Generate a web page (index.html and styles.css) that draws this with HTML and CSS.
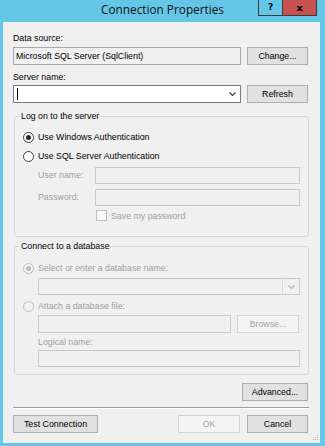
FILE: index.html
```html
<!DOCTYPE html>
<html>
<head>
<meta charset="utf-8">
<title>Connection Properties</title>
<link rel="stylesheet" href="styles.css">
</head>
<body>
<div class="window">
  <div class="titlebar">
    <div class="title">Connection Properties</div>
    <div class="caption-btns">
      <span class="cap-help">?</span>
      <span class="cap-close">x</span>
    </div>
  </div>
  <div class="client">
    <div class="label ds-label">Data source:</div>
    <div class="field-row ds-row">
      <div class="textbox readonly ds-box">Microsoft SQL Server (SqlClient)</div>
      <button class="btn side-btn">Change...</button>
    </div>
    <div class="label server-label">Server name:</div>
    <div class="field-row server-row">
      <div class="combo focused server-combo">
        <span class="caret"></span>
        <svg class="chev" width="7" height="4" viewBox="0 0 7 4"><polyline points="0.5,0.5 3.5,3.5 6.5,0.5" fill="none" stroke="#3c3c3c" stroke-width="1.1"/></svg>
      </div>
      <button class="btn side-btn">Refresh</button>
    </div>

    <fieldset class="group logon-group">
      <legend>Log on to the server</legend>
      <div class="radio-row win-row"><span class="radio checked"></span><span>Use Windows Authentication</span></div>
      <div class="radio-row sql-row"><span class="radio"></span><span>Use SQL Server Authentication</span></div>
      <div class="cred-row user-row">
        <span class="cred-label disabled-text">User name:</span>
        <div class="textbox disabled cred-box"></div>
      </div>
      <div class="cred-row pass-row">
        <span class="cred-label disabled-text">Password:</span>
        <div class="textbox disabled cred-box"></div>
      </div>
      <div class="check-row">
        <span class="checkbox disabled"></span><span class="disabled-text">Save my password</span>
      </div>
    </fieldset>

    <fieldset class="group db-group">
      <legend>Connect to a database</legend>
      <div class="radio-row select-row disabled-text"><span class="radio checked disabled"></span><span>Select or enter a database name:</span></div>
      <div class="combo disabled db-combo">
        <span class="combo-btn">
          <svg class="chev" width="7" height="4" viewBox="0 0 7 4"><polyline points="0.5,0.5 3.5,3.5 6.5,0.5" fill="none" stroke="#b5b5b5" stroke-width="1.1"/></svg>
        </span>
      </div>
      <div class="radio-row attach-row disabled-text"><span class="radio disabled"></span><span>Attach a database file:</span></div>
      <div class="file-row">
        <div class="textbox disabled file-box"></div>
        <button class="btn disabled browse-btn">Browse...</button>
      </div>
      <div class="label disabled-text logical-label">Logical name:</div>
      <div class="textbox disabled logical-box"></div>
    </fieldset>

    <div class="advanced-row">
      <button class="btn advanced-btn">Advanced...</button>
    </div>
    <div class="separator"></div>
    <div class="bottom-row">
      <button class="btn test-btn">Test Connection</button>
      <div class="bottom-right">
        <button class="btn disabled ok-btn">OK</button>
        <button class="btn cancel-btn">Cancel</button>
      </div>
    </div>
    <svg class="grip" width="7" height="7" viewBox="0 0 7 7">
      <rect x="5" y="0" width="1" height="1" fill="#b8b8b8"/>
      <rect x="3" y="2" width="1" height="1" fill="#b8b8b8"/>
      <rect x="5" y="2" width="1" height="1" fill="#b8b8b8"/>
      <rect x="1" y="4" width="1" height="1" fill="#b8b8b8"/>
      <rect x="3" y="4" width="1" height="1" fill="#b8b8b8"/>
      <rect x="5" y="4" width="1" height="1" fill="#b8b8b8"/>
    </svg>
  </div>
</div>
</body>
</html>
```

FILE: styles.css
```css
html, body {
  margin: 0;
  padding: 0;
}

body {
  background: #65c7e7;
  font-family: "Liberation Sans", Arial, sans-serif;
  font-size: 8.8px;
  color: #000;
}

.window {
  width: 325px;
  height: 446px;
  display: flex;
  flex-direction: column;
}

/* ---------- title bar ---------- */
.titlebar {
  height: 22px;
  flex: none;
  display: grid;
  grid-template-columns: 1fr auto 1fr;
  align-items: start;
}

.title {
  grid-column: 2;
  font-family: "Open Sans", "Liberation Sans", sans-serif;
  font-size: 11.8px;
  line-height: 16px;
  padding-top: 1px;
  color: #111;
  white-space: nowrap;
}

.caption-btns {
  grid-column: 3;
  justify-self: end;
  margin-right: 8px;
  display: flex;
  height: 15px;
  border: 1px solid #3a3a3a;
  border-top: 0;
}

.cap-help,
.cap-close {
  display: flex;
  align-items: center;
  justify-content: center;
  font-family: "DejaVu Sans", sans-serif;
  font-weight: bold;
  font-size: 9px;
  line-height: 15px;
  color: #000;
}

.cap-help {
  width: 23px;
  background: #65c7e7;
}

.cap-close {
  width: 33px;
  background: #c75050;
  border-left: 1px solid #3a3a3a;
  font-size: 9.5px;
}

/* ---------- client area ---------- */
.client {
  position: relative;
  margin: 0 5px 0 3px;
  height: 421px;
  box-sizing: border-box;
  background: #f0f0f0;
  padding: 11px 11px 0 10px;
  display: flex;
  flex-direction: column;
}

.label {
  line-height: 11px;
  height: 11px;
  white-space: nowrap;
}

.disabled-text {
  color: #a0a0a0;
}

.field-row {
  display: flex;
  align-items: center;
  gap: 6px;
}

.ds-row {
  margin-top: 3px;
}

.server-label {
  margin-top: 7px;
}

.server-row {
  margin-top: 2px;
}

.textbox,
.combo {
  box-sizing: border-box;
  border: 1px solid #c9c9c9;
  background: #f0f0f0;
  height: 17px;
  line-height: 15px;
  padding-left: 2px;
  white-space: nowrap;
}

.textbox.readonly {
  border-color: #a9a9a9;
  background: #f0f0f0;
  height: 18px;
  line-height: 16px;
}

.ds-box {
  width: 228px;
}

.combo {
  display: flex;
  align-items: center;
}

.combo.focused {
  background: #fff;
  border-color: #6f7f8f;
  height: 18px;
  width: 228px;
}

.caret {
  display: block;
  width: 1px;
  height: 12px;
  background: #000;
  margin-left: 1px;
}

.server-combo .chev {
  margin-left: auto;
  margin-right: 4px;
}

/* ---------- buttons ---------- */
.btn {
  box-sizing: border-box;
  height: 18px;
  margin: 0;
  padding: 0;
  border: 1px solid #adadad;
  border-radius: 0;
  background: #e1e1e1;
  font: inherit;
  color: #000;
  line-height: 16px;
  text-align: center;
  white-space: nowrap;
}

.btn.disabled {
  background: #f4f4f4;
  border-color: #d2d2d2;
  color: #a3a3a3;
}

.side-btn {
  width: 61px;
}

/* ---------- group boxes ---------- */
.group {
  margin: 8px 0 0 1px;
  padding: 0 8px 0 8px;
  border: 1px solid #d7d7d7;
  border-radius: 3px;
  min-width: 0;
  display: flex;
  flex-direction: column;
}

.group legend {
  margin-left: -4px;
  padding: 0 2px;
  line-height: 11px;
  white-space: nowrap;
}

.logon-group {
  padding-bottom: 14px;
}

.db-group {
  margin-top: 4px;
  padding-bottom: 7px;
}

.radio-row {
  display: flex;
  align-items: center;
  gap: 4px;
  height: 13px;
  line-height: 13px;
  white-space: nowrap;
}

.radio {
  box-sizing: border-box;
  width: 11px;
  height: 11px;
  border: 1px solid #3c3c3c;
  border-radius: 50%;
  background: #fff;
  display: flex;
  align-items: center;
  justify-content: center;
  flex: none;
}

.radio.checked::after {
  content: "";
  width: 5px;
  height: 5px;
  border-radius: 50%;
  background: #2a2a2a;
}

.radio.disabled {
  border-color: #bcbcbc;
  background: #f4f4f4;
}

.radio.disabled.checked::after {
  background: #bdbdbd;
}

.win-row {
  margin-top: 9px;
}

.sql-row {
  margin-top: 6px;
}

.cred-row {
  display: flex;
  align-items: center;
  padding-left: 15px;
}

.cred-label {
  width: 57px;
  line-height: 11px;
}

.cred-box {
  width: 205px;
}

.user-row {
  margin-top: 4px;
}

.pass-row {
  margin-top: 5px;
}

.check-row {
  display: flex;
  align-items: center;
  gap: 4px;
  margin-top: 3px;
  height: 13px;
  padding-left: 73px;
  white-space: nowrap;
}

.checkbox {
  box-sizing: border-box;
  width: 11px;
  height: 11px;
  border: 1px solid #bcbcbc;
  background: #f7f7f7;
  flex: none;
}

.select-row {
  margin-top: 10px;
}

.db-combo {
  margin: 3px 0 0 15px;
  width: 262px;
  padding-left: 0;
}

.combo-btn {
  margin-left: auto;
  width: 16px;
  height: 15px;
  border-left: 1px solid #dadada;
  display: flex;
  align-items: center;
  justify-content: center;
}

.attach-row {
  margin-top: 5px;
}

.file-row {
  display: flex;
  align-items: center;
  gap: 6px;
  margin: 2px 0 0 15px;
}

.file-box {
  width: 193px;
  height: 18px;
}

.browse-btn {
  width: 62px;
}

.logical-label {
  margin: 4px 0 0 15px;
}

.logical-box {
  margin: 2px 0 0 15px;
  width: 262px;
}

/* ---------- bottom ---------- */
.advanced-row {
  display: flex;
  justify-content: flex-end;
  margin-top: 8px;
  padding-right: 1px;
}

.advanced-btn {
  width: 66px;
}

.separator {
  margin-top: 6px;
  height: 0;
  border-top: 1px solid #a0a0a0;
  border-bottom: 1px solid #ffffff;
}

.bottom-row {
  display: flex;
  justify-content: space-between;
  margin-top: 6px;
  padding-right: 1px;
}

.bottom-right {
  display: flex;
  gap: 7px;
}

.test-btn {
  width: 85px;
}

.ok-btn {
  width: 62px;
}

.cancel-btn {
  width: 61px;
}

.grip {
  position: absolute;
  right: 1px;
  bottom: 1px;
}
```
